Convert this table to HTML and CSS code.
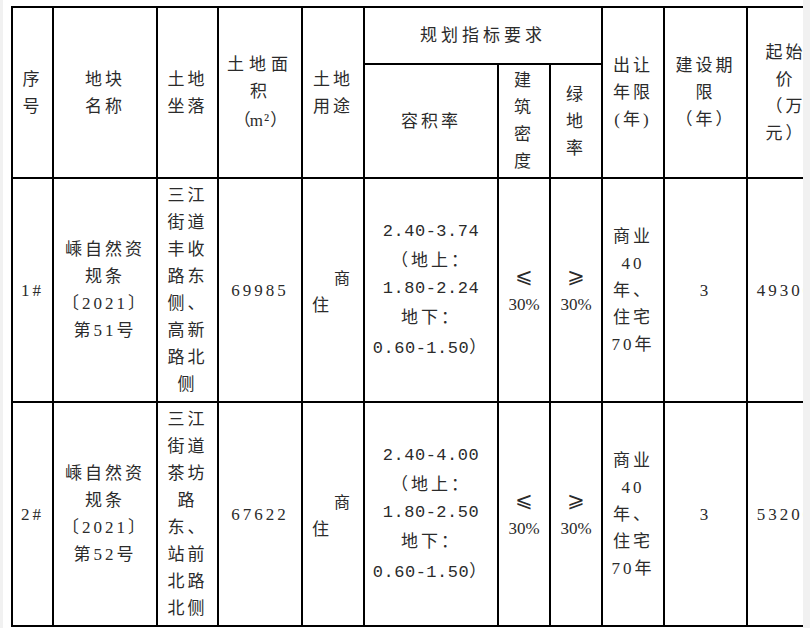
FILE: index.html
```html
<!DOCTYPE html>
<html lang="zh-CN">
<head>
<meta charset="utf-8">
<title>地块出让一览表</title>
<link rel="stylesheet" href="styles.css">
</head>
<body>
<div class="page">
<table class="grid">
  <colgroup>
    <col class="c-no"><col class="c-name"><col class="c-loc"><col class="c-area"><col class="c-use">
    <col class="c-far"><col class="c-dens"><col class="c-green"><col class="c-term"><col class="c-build"><col class="c-price">
  </colgroup>
  <tr class="head head-top">
    <td rowspan="2">序<br>号</td>
    <td rowspan="2">地块<br>名称</td>
    <td rowspan="2">土地<br>坐落</td>
    <td rowspan="2"><span class="wide">土地面</span><br>积<br><span class="unit"><span class="br">（</span>m²<span class="br">）</span></span></td>
    <td rowspan="2">土地<br>用途</td>
    <td colspan="3" class="plan">规划指标要求</td>
    <td rowspan="2">出让<br>年限<br>(年)</td>
    <td rowspan="2">建设期<br>限<br>（年）</td>
    <td rowspan="2">起始<br>价<br>（万<br>元）</td>
  </tr>
  <tr class="head">
    <td>容积率</td>
    <td>建<br>筑<br>密<br>度</td>
    <td>绿<br>地<br>率</td>
  </tr>
  <tr class="row">
    <td>1#</td>
    <td>嵊自然资<br>规条<br>〔2021〕<br>第51号</td>
    <td>三江<br>街道<br>丰收<br>路东<br>侧、<br>高新<br>路北<br>侧</td>
    <td>69985</td>
    <td class="use"><span class="use-a">商</span><br><span class="use-b">住</span></td>
    <td class="far">2.40-3.74<br><span class="cj">（地上：</span><br>1.80-2.24<br><span class="cj">地下：</span><br>0.60-1.50<span class="cj">）</span></td>
    <td class="pct"><span class="cmp">⩽</span><br>30%</td>
    <td class="pct"><span class="cmp">⩾</span><br>30%</td>
    <td>商业<br>40<br>年、<br>住宅<br>70年</td>
    <td>3</td>
    <td>49300</td>
  </tr>
  <tr class="row">
    <td>2#</td>
    <td>嵊自然资<br>规条<br>〔2021〕<br>第52号</td>
    <td>三江<br>街道<br>茶坊<br>路<br>东、<br>站前<br>北路<br>北侧</td>
    <td>67622</td>
    <td class="use"><span class="use-a">商</span><br><span class="use-b">住</span></td>
    <td class="far">2.40-4.00<br><span class="cj">（地上：</span><br>1.80-2.50<br><span class="cj">地下：</span><br>0.60-1.50<span class="cj">）</span></td>
    <td class="pct"><span class="cmp">⩽</span><br>30%</td>
    <td class="pct"><span class="cmp">⩾</span><br>30%</td>
    <td>商业<br>40<br>年、<br>住宅<br>70年</td>
    <td>3</td>
    <td>53200</td>
  </tr>
</table>
</div>
</body>
</html>
```

FILE: styles.css
```css
html, body {
  margin: 0;
  padding: 0;
}

body {
  background: #f1f1f1;
  font-family: "Liberation Serif", "Noto Sans CJK SC", serif;
  color: #2b2b2b;
}

.page {
  margin-left: 3px;
  width: 800px;
  height: 628px;
  background: #fff;
  overflow: hidden;
  box-sizing: border-box;
  padding: 6px 0 0 8px;
}

.grid {
  border-collapse: collapse;
  table-layout: fixed;
  width: 812px;
  font-size: 17px;
  line-height: 27px;
  letter-spacing: 3px;
  text-spacing-trim: space-all;
}

.c-no { width: 41px; }
.c-name { width: 104px; }
.c-loc { width: 61px; }
.c-area { width: 84px; }
.c-use { width: 62px; }
.c-far { width: 134px; }
.c-dens { width: 52px; }
.c-green { width: 52px; }
.c-term { width: 62px; }
.c-build { width: 83px; }
.c-price { width: 77px; }

.grid td {
  border: 2px solid #000;
  padding: 3px 2px;
  text-align: center;
  vertical-align: middle;
  white-space: nowrap;
  overflow: hidden;
}

.grid .head td {
  padding: 2px;
}

.grid .head-top .plan {
  height: 51px;
  letter-spacing: 4px;
}

.wide {
  letter-spacing: 5px;
}

.unit {
  letter-spacing: 1px;
}

.unit .br {
  display: inline-block;
  width: 16px;
  font-family: "Noto Sans CJK SC", sans-serif;
  letter-spacing: 0;
}

.grid .use {
  text-align: left;
  padding-left: 9px;
}

.use-a {
  display: inline-block;
  margin-left: 22px;
  font-size: 16px;
  transform: translateY(2px);
}

.use-b {
  display: inline-block;
  transform: translateY(2px);
}

.far {
  font-family: "Liberation Mono", "Noto Sans CJK SC", monospace;
  letter-spacing: 0.5px;
}

.far .cj {
  font-family: "Noto Sans CJK SC", sans-serif;
  letter-spacing: 3px;
}

.pct {
  letter-spacing: 0;
}

.cmp {
  font-family: "DejaVu Sans", "Noto Sans CJK SC", sans-serif;
  font-size: 21px;
}
```
